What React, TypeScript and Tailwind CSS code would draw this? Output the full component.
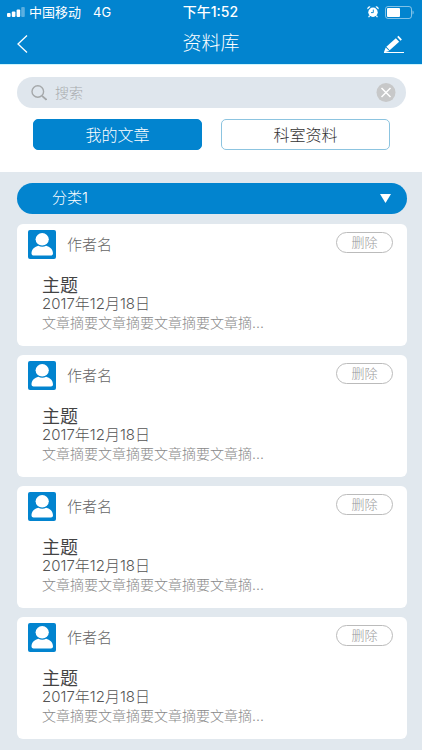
import { useState } from "react";

const articles = [1, 2, 3, 4].map((id) => ({
  id,
  author: "作者名",
  title: "主题",
  date: "2017年12月18日",
  summary: "文章摘要文章摘要文章摘要文章摘...",
}));

function StatusBar() {
  return (
    <div className="grid h-6 grid-cols-3 items-center pr-2 pl-[7px] text-sm leading-6">
      <div className="flex items-center gap-1 whitespace-nowrap text-[13px] font-normal">
        <svg width="18" height="10" viewBox="0 0 18 10" fill="currentColor" aria-hidden="true">
          <rect x="0" y="6" width="3.6" height="4" rx="1" />
          <rect x="4.8" y="4.5" width="3.6" height="5.5" rx="1" />
          <rect x="9.6" y="2.5" width="3.6" height="7.5" rx="1" />
          <rect x="14.2" y="0" width="3.6" height="10" rx="1" opacity="0.35" />
        </svg>
        <span>中国移动</span>
        <span className="ml-2">4G</span>
      </div>
      <div className="text-center font-medium">下午1:52</div>
      <div className="flex items-center justify-end gap-1.5">
        <svg width="12" height="12" viewBox="0 0 12 12" aria-hidden="true">
          <path d="M.9 3.2A2 2 0 0 1 3.2.9M8.8.9a2 2 0 0 1 2.3 2.3" fill="none" stroke="currentColor" strokeWidth="1.2" />
          <path d="m2.6 9.6-1 1.6M9.4 9.6l1 1.6" stroke="currentColor" strokeWidth="1.2" />
          <circle cx="6" cy="6.3" r="4.7" fill="currentColor" />
          <path d="M6.3 3.6v3H4" fill="none" stroke="#0284cf" strokeWidth="0.9" />
        </svg>
        <svg width="29" height="13" viewBox="0 0 29 13" aria-hidden="true">
          <rect x="0.5" y="0.5" width="26" height="12" rx="2.5" fill="none" stroke="currentColor" opacity="0.5" />
          <rect x="2" y="2" width="13" height="9" rx="1" fill="currentColor" />
          <path d="M27.5 4.5c1.6.6 1.6 3.4 0 4z" fill="currentColor" opacity="0.5" />
        </svg>
      </div>
    </div>
  );
}

function NavBar() {
  return (
    <div className="grid h-10 grid-cols-[1fr_auto_1fr] items-center px-4">
      <button type="button" aria-label="返回" className="justify-self-start">
        <svg width="12" height="20" viewBox="0 0 12 20" fill="none" stroke="currentColor" strokeWidth="1.3" aria-hidden="true">
          <path d="M11 1.500 2 10l9 8.500" />
        </svg>
      </button>
      <h1 className="text-[19px] leading-10 font-light">资料库</h1>
      <button type="button" aria-label="编辑" className="justify-self-end">
        <svg width="24" height="20" viewBox="0 0 24 20" fill="none" stroke="currentColor" aria-hidden="true">
          <path d="M6 14.500 15.500 6" strokeWidth="5" />
          <path d="m16.900 4.800 1.300-1.200" strokeWidth="5" strokeLinejoin="round" />
          <path d="m1.800 18.400 1.900-4.900 3.700 3.600z" fill="currentColor" stroke="none" />
          <path d="M2 18.500h20" strokeWidth="1" />
        </svg>
      </button>
    </div>
  );
}

function ArticleCard({ article }: { article: (typeof articles)[number] }) {
  return (
    <article className="rounded-md bg-white pt-1.5 pr-3.5 pb-3.5 pl-[11px]">
      <div className="flex items-start">
        <svg width="28" height="29" viewBox="0 0 28 29" aria-hidden="true">
          <rect width="28" height="29" rx="2" fill="#0284cf" />
          <ellipse cx="14.200" cy="9.300" rx="6.600" ry="6.200" fill="#fff" />
          <path d="M3.500 23.500c0-4.500 3.500-7 6.800-7.800 2.600 1.400 5.300 1.400 7.900 0 3.300.8 6.800 3.300 6.800 7.800 0 1.200-1 2-2 2H5.500c-1 0-2-.8-2-2z" fill="#fff" />
        </svg>
        <span className="ml-[11px] text-[15px] leading-[30px] text-[#666]">{article.author}</span>
        <button type="button" className="mt-0.5 ml-auto h-[21px] w-[57px] rounded-full border border-[#bbb] text-[13px] leading-none text-[#999]">
          删除
        </button>
      </div>
      <div className="mt-[17px] ml-3.5">
        <h2 className="text-lg leading-[18px] font-normal text-[#444]">{article.title}</h2>
        <p className="text-[15px] leading-[18px] text-[#555]">{article.date}</p>
        <p className="text-sm leading-[19px] text-[#888]">{article.summary}</p>
      </div>
    </article>
  );
}

export default function App() {
  const [query, setQuery] = useState("");
  const [tab, setTab] = useState(0);
  const tabs = ["我的文章", "科室资料"];

  return (
    <div className="min-h-screen bg-[#e1e8ee] pb-3 font-[Inter,'Noto_Sans_CJK_SC',sans-serif] font-light">
      <header className="border-b border-[#cdf5fd] bg-[#0284cf] text-white">
        <StatusBar />
        <NavBar />
      </header>
      <section className="bg-white pt-3 pr-4 pb-[22px] pl-[17px]">
        <div className="flex h-[31px] items-center rounded-full bg-[#dfe6ed] pr-2.5 pl-3.5">
          <svg width="16" height="16" viewBox="0 0 16 16" fill="none" stroke="#a5a8aa" strokeWidth="1.4" aria-hidden="true">
            <circle cx="6.8" cy="6.5" r="5.8" />
            <path d="m11 10.800 4.500 4" strokeWidth="1.8" />
          </svg>
          <input
            type="text"
            aria-label="搜索"
            placeholder="搜索"
            value={query}
            onChange={(e) => setQuery(e.target.value)}
            className="ml-2 min-w-0 flex-1 text-sm text-[#666] outline-none placeholder:text-[#a8abae]"
          />
          <button type="button" aria-label="清除" onClick={() => setQuery("")}>
            <svg width="20" height="20" viewBox="0 0 20 20" aria-hidden="true">
              <circle cx="10" cy="9.5" r="9.5" fill="#c7c8c9" />
              <path d="m5.500 5 9 9m0-9-9 9" stroke="#fff" strokeWidth="1.5" />
            </svg>
          </button>
        </div>
        <div className="mt-[11px] grid grid-cols-2 gap-[19px] px-4">
          {tabs.map((label, i) => (
            <button
              key={label}
              type="button"
              aria-pressed={tab === i}
              onClick={() => setTab(i)}
              className={
                tab === i
                  ? "h-[31px] rounded-[5px] border border-[#0284cf] bg-[#0284cf] text-base leading-none text-white"
                  : "h-[31px] rounded-[5px] border border-[#8cc4e0] bg-white text-base leading-none text-[#333]"
              }
            >
              {label}
            </button>
          ))}
        </div>
      </section>
      <main className="pt-[11px] pr-[15px] pl-[17px]">
        <div className="grid items-center">
          <select
            aria-label="分类"
            className="col-start-1 row-start-1 h-[31px] w-full appearance-none rounded-full bg-[#0284cf] pr-10 pl-[35px] text-[15px] text-white"
          >
            <option>分类1</option>
          </select>
          <svg width="11" height="9" viewBox="0 0 11 9" className="pointer-events-none col-start-1 row-start-1 mr-4 justify-self-end" aria-hidden="true">
            <path d="M0 0h11L5.500 9z" fill="#fff" />
          </svg>
        </div>
        <div className="mt-2.5 flex flex-col gap-[9px]">
          {articles.map((article) => (
            <ArticleCard key={article.id} article={article} />
          ))}
        </div>
      </main>
    </div>
  );
}
